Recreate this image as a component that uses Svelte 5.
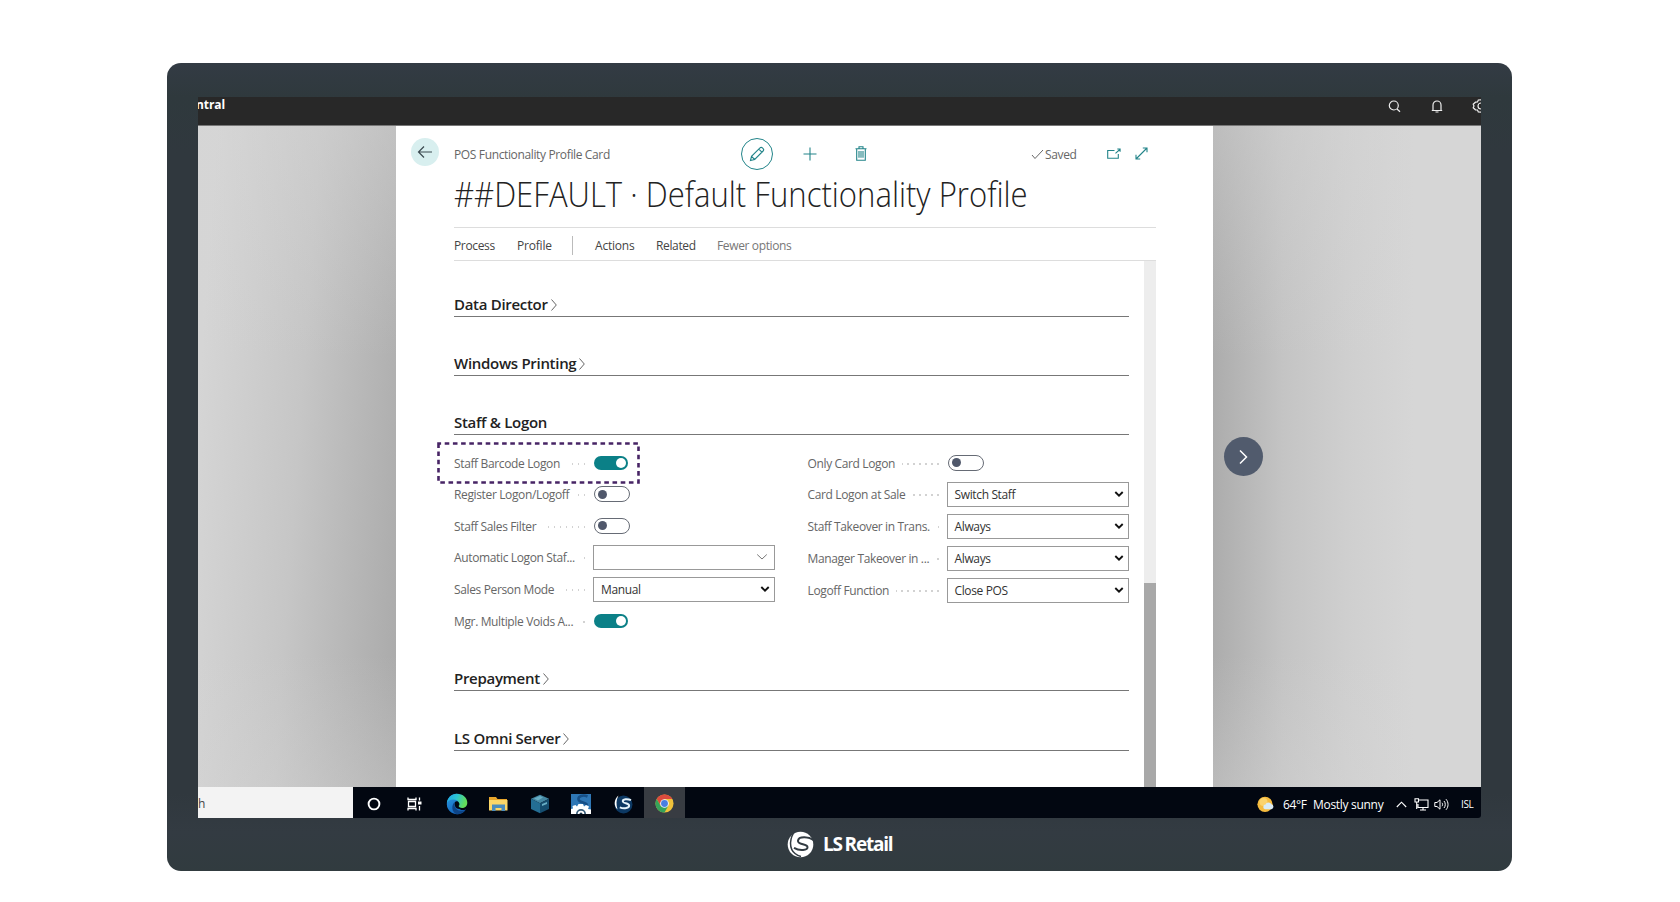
<script>
  const left = [
    { label: 'Staff Barcode Logon', type: 'toggle', on: true, mark: true, h: 31 },
    { label: 'Register Logon/Logoff', type: 'toggle', on: false, h: 32 },
    { label: 'Staff Sales Filter', type: 'toggle', on: false, h: 31 },
    { label: 'Automatic Logon Staf...', type: 'lookup', value: '', h: 32 },
    { label: 'Sales Person Mode', type: 'select', value: 'Manual', h: 32 },
    { label: 'Mgr. Multiple Voids A...', type: 'toggle', on: true, h: 31 }
  ];
  const right = [
    { label: 'Only Card Logon', type: 'toggle', on: false, h: 31 },
    { label: 'Card Logon at Sale', type: 'select', value: 'Switch Staff', h: 32 },
    { label: 'Staff Takeover in Trans.', type: 'select', value: 'Always', h: 32 },
    { label: 'Manager Takeover in ...', type: 'select', value: 'Always', h: 32 },
    { label: 'Logoff Function', type: 'select', value: 'Close POS', h: 32 }
  ];
</script>

{#snippet field(f)}
  <div class="field" style="height:{f.h}px">
    <div class="label"><span>{f.label}</span><i></i></div>
    {#if f.type === 'toggle'}
      <div class="toggle" class:on={f.on}><b></b></div>
    {:else}
      <div class="box">
        <span>{f.value}</span>
        {#if f.type === 'select'}
          <svg width="10" height="8" viewBox="0 0 10 8"><path d="M1.3 2l3.7 3.6L8.7 2" fill="none" stroke="#111" stroke-width="1.9" /></svg>
        {:else}
          <svg class="thin" width="12" height="8" viewBox="0 0 12 8"><path d="M1.2 1.5L6 6l4.8-4.5" fill="none" stroke="#777" stroke-width="1" /></svg>
        {/if}
      </div>
    {/if}
    {#if f.mark}
      <svg class="mark" width="203" height="42" viewBox="0 0 203 42"><rect x="1.5" y="1.5" width="200" height="39" fill="none" stroke="#472465" stroke-width="2.6" stroke-dasharray="4.6 3.6" stroke-dashoffset="2" /></svg>
    {/if}
  </div>
{/snippet}

{#snippet heading(text, arrow)}
  <h2>
    <span>{text}</span>
    {#if arrow}
      <svg width="8" height="14" viewBox="0 0 8 14"><path d="M1.5 1.5L6.3 7l-4.8 5.5" fill="none" stroke="#666" stroke-width="1" /></svg>
    {/if}
  </h2>
{/snippet}

<main>
  <div class="monitor">
    <div class="screen">
      <header>
        <strong>ntral</strong>
        <svg class="search" width="13" height="13" viewBox="0 0 13 13"><circle cx="5.8" cy="5.5" r="4.5" /><path d="M9 9l3 2.8" /></svg>
        <svg class="bell" width="12" height="13" viewBox="0 0 12 13"><path d="M2 10.5V5a4 4 0 0 1 8 0v5.5M.8 10.500h10.400M4.500 12h3" /></svg>
        <svg class="gear" width="9" height="14" viewBox="0 0 9 14"><path d="M9 .8L6.300 1 5.500 3 3.500 3.200 1.200 5.200 2 7 1.200 8.800l2.300 2L5.500 11l.8 2 2.700.2M9 4a3 3 0 0 0 0 6" /></svg>
      </header>

      <div class="desk">
        <div class="gutter west"></div>
        <section class="panel">
          <div class="tools">
            <div class="back"><svg width="16" height="14" viewBox="0 0 16 14"><path d="M15 7H1.500M7 1.500L1.500 7 7 12.500" /></svg></div>
            <span class="crumb">POS Functionality Profile Card</span>
            <div class="edit"><svg width="16" height="16" viewBox="0 0 16 16"><path d="M1.500 14.500l1-4.200L11 1.900c.7-.7 1.700-.7 2.400 0l.7.700c.7.700.7 1.700 0 2.400L5.700 13.500zM2.500 10.300l3.200 3.200M9.800 3.100l3.100 3.100" /></svg></div>
            <svg class="plus" width="14" height="14" viewBox="0 0 14 14"><path d="M7 .5v13M.5 7h13" /></svg>
            <svg class="bin" width="12" height="15" viewBox="0 0 12 15"><path d="M.5 2.700h11M4 2.700V.8h4v1.900M1.700 2.700v11.500h8.600V2.700M4 5v6.800M6 5v6.800M8 5v6.800" /></svg>
            <span class="saved"><svg width="13" height="11" viewBox="0 0 13 11"><path d="M1 6l3 3.500L12 1" /></svg>Saved</span>
            <svg class="pop" width="14" height="11" viewBox="0 0 14 11"><path d="M7.500 2.500H.7v7.700h10.600V6M8.500 5.300l4.300-3.800M10.300 1h2.800v2.800" /></svg>
            <svg class="grow" width="13" height="13" viewBox="0 0 13 13"><path d="M1 12L12 1M7.800 1H12v4.200M1 7.800V12h4.200" /></svg>
          </div>
          <h1>##DEFAULT · Default Functionality Profile</h1>
          <nav>
            <span class="process">Process</span><span class="profile">Profile</span><em></em><span class="actions">Actions</span><span class="related">Related</span><span class="fewer">Fewer options</span>
          </nav>
          <div class="body">
            <div class="form">
              {@render heading('Data Director', true)}
              {@render heading('Windows Printing', true)}
              {@render heading('Staff & Logon', false)}
              <div class="cols">
                <div class="col">{#each left as f}{@render field(f)}{/each}</div>
                <div class="col">{#each right as f}{@render field(f)}{/each}</div>
              </div>
              {@render heading('Prepayment', true)}
              {@render heading('LS Omni Server', true)}
            </div>
            <div class="scroll"><div class="thumb"></div></div>
          </div>
        </section>
        <div class="gutter east">
          <div class="next"><svg width="11" height="16" viewBox="0 0 11 16"><path d="M2 1.500L8.500 8 2 14.500" fill="none" stroke="#fff" stroke-width="1.500" /></svg></div>
        </div>
      </div>

      <footer>
        <div class="find">h</div>
        <div class="apps">
          <div class="app"><svg width="14" height="14" viewBox="0 0 14 14"><circle cx="7" cy="7" r="5.400" fill="none" stroke="#fff" stroke-width="1.900" /></svg></div>
          <div class="app"><svg class="views" width="15" height="14" viewBox="0 0 15 14"><path d="M1 .5v2h8v-2M1 13.500v-2h8v2M1.500 4.500h7v5h-7zM12.500.5v3M12.500 9v4.500" fill="none" stroke="#fff" stroke-width="1.300" /><path d="M11 4.500h3.500v3H11z" fill="#fff" /></svg></div>
          <div class="app"><svg width="22" height="22" viewBox="0 0 22 22">
            <defs>
              <linearGradient id="ea" x1="0" y1="0" x2="1" y2="0.300"><stop offset="0" stop-color="#1fa5e8" /><stop offset=".5" stop-color="#2bc4d3" /><stop offset="1" stop-color="#63de58" /></linearGradient>
              <linearGradient id="eb" x1="0" y1="0" x2="0.600" y2="1"><stop offset="0" stop-color="#2a9be6" /><stop offset="1" stop-color="#1262b8" /></linearGradient>
            </defs>
            <path d="M11 .7A10.300 10.300 0 1 0 19.800 16.500c-3 1.300-7 .6-7.300-2.500L13 6z" fill="url(#eb)" />
            <path d="M.8 10C1.500 4.500 5.800.7 11 .7c6 0 10.300 4.300 10.300 9 0 3.400-2.500 5.300-5.300 5.300-2.600 0-3.800-1-3.300-1.800.6-.9.900-1.700.6-2.700C12.700 8 10 6.300 7 6.500 4 6.700 1.700 8 .8 10z" fill="url(#ea)" />
            <path d="M8.800 9c-1.500 4.500 1.400 8.500 5.700 8.800 2 .1 4-.2 5.300-1.300-2 3-5 4.700-8.800 4.800C5.500 19.500 5 12 8.800 9z" fill="#0d4487" />
            <path d="M9 9c1.500-1.300 3.500-.6 4 1 .3 1.200-.2 2.300-.4 3.200.3 1.200 2 1.900 4 1.700-1.800 1-3.500 1.300-5.600.6C9 14.500 8 11.500 9 9z" fill="#020711" />
          </svg></div>
          <div class="app"><svg width="19" height="16" viewBox="0 0 19 16"><path d="M0 1h7l1.500 2H18v11H0z" fill="#e9a62c" /><path d="M0 4h18.500v10.500H0z" fill="#fbd768" /><path d="M3 8.500h13V15h-3.500v-3h-6v3H3z" fill="#4b8dbd" /></svg></div>
          <div class="app"><svg width="20" height="20" viewBox="0 0 20 20"><path d="M10 .8l9 4-9 4.500-9-4.500z" fill="#4487a3" /><path d="M1 4.800l9 4.500v10L1 15z" fill="#246e94" /><path d="M19 4.800l-9 4.500v10l9-4.300z" fill="#154d6f" /><path d="M4 4.500l6-2.500 3 1.500-5 3zM12 10l5-2v2l-5 2z" fill="#68aec5" /></svg></div>
          <div class="app"><svg width="20" height="20" viewBox="0 0 20 20"><path d="M0 0h20v20H0z" fill="#2f77b5" /><path d="M16.500 2.500C12 .5 7 2 7.500 5.500s8 2.500 8.500 5.500" fill="none" stroke="#174f86" stroke-width="2.500" /><path d="M0 20v-5l2-.5-.5-2.500 3-1 1.500 1.500 1.500-2.500h4.500l1 2.500 2-1.500 3 1.500-1 2.500 3 .5v4.500z" fill="#fff" /><path d="M5 20a5 5 0 0 1 10 0h-1.700a3.300 3.300 0 0 0-6.600 0z" fill="#375b78" /><path d="M8.500 20a1.500 1.500 0 0 1 3 0z" fill="#17344d" /></svg></div>
          <div class="app"><svg width="20" height="20" viewBox="0 0 20 20"><circle cx="10.500" cy="10.500" r="9" fill="#0c3863" /><path d="M5.500 1.500C.8 5.500.5 11.500 4.500 15.500 3 10.500 3 6 5.500 1.500z" fill="#fff" /><path d="M18 6.200C14.500 4.500 9.500 4.800 9.800 7.500c.3 2.300 6 1.300 6.300 4 .2 2.500-4.800 3.800-9.300 1.800" fill="none" stroke="#e4f2fa" stroke-width="2" /></svg></div>
          <div class="app current"><svg width="19" height="19" viewBox="0 0 20 20"><circle cx="10" cy="10" r="9.500" fill="#f0c13b" /><path d="M1.770 5.250A9.500 9.500 0 0 1 18.230 5.250H10L6 12.300z" fill="#dc4b3d" /><path d="M1.770 5.250A9.500 9.500 0 0 0 10 19.500l4-7.100-7.800.4z" fill="#35a35a" /><circle cx="10" cy="10" r="4.600" fill="#f4f6f4" /><circle cx="10" cy="10" r="3.600" fill="#4a7ee0" /></svg></div>
        </div>
        <div class="tray">
          <svg class="sun" width="17" height="17" viewBox="0 0 17 17"><circle cx="8" cy="8.300" r="7.600" fill="#f5bb3e" /><circle cx="6.500" cy="6" r="4" fill="#fbd36d" /><path d="M8 13.200a2.400 2.400 0 0 1 .5-4.700 3.200 3.200 0 0 1 5.900-.2 2.500 2.500 0 0 1 .1 4.900z" fill="#d9ebf5" /></svg>
          <span class="temp">64°F</span><span class="sky">Mostly sunny</span>
          <svg class="up" width="11" height="7" viewBox="0 0 11 7"><path d="M.8 6L5.500 1.200 10.200 6" fill="none" stroke="#fff" stroke-width="1.100" /></svg>
          <svg class="net" width="15" height="13" viewBox="0 0 15 13"><path d="M5 2h9v7.500H4V6M9 9.500V12M6 12h6M1 .8h3.500V4H1zM2.700 4v7" fill="none" stroke="#fff" stroke-width="1.100" /></svg>
          <svg class="vol" width="15" height="13" viewBox="0 0 15 13"><path d="M.8 4.500v4h2.200l3 2.700V1.800L3 4.500zM8 4.800c.8 1 .8 2.400 0 3.400M10 3c1.700 2 1.700 5 0 7M12 1.200c2.700 3 2.700 7.600 0 10.600" fill="none" stroke="#fff" stroke-width="1" /></svg>
          <span class="lang">ISL</span>
        </div>
      </footer>
    </div>
    <div class="brand">
      <svg width="27" height="27" viewBox="0 0 27 27">
        <circle cx="13.500" cy="13.500" r="12.800" fill="#fff" />
        <path d="M8.500-.5C2.500 6.500 1.500 17 8 22.500c2 1.700 4 2.600 6 3" fill="none" stroke="#323b42" stroke-width="1.500" />
        <path d="M27 9.500C22 5.500 11.500 5 11 9.700c-.4 4.300 9.300 2.600 9.500 6.300.2 3.200-7.500 4.400-13.500.8" fill="none" stroke="#323b42" stroke-width="2" />
      </svg>
      <span>LS Retail</span>
    </div>
  </div>
</main>

<style>
  :global(body) { margin: 0; background: #fff; }
  main { width: 1680px; height: 902px; padding: 63px 0 0 167px; box-sizing: border-box; overflow: hidden; font-family: "Open Sans", "Noto Sans", sans-serif; font-size: 12px; letter-spacing: -.36px; color: #444; white-space: nowrap; }
  .monitor { width: 1345px; height: 808px; border-radius: 14px; box-sizing: border-box; padding: 34px 0 0 31px; background: linear-gradient(180deg, #333b44 0, #2f393d 34px, #30383e 90px, #30383e 730px, #333b42 770px, #313b3f 100%); }
  .screen { width: 1283px; height: 721px; display: flex; flex-direction: column; overflow: hidden; border-radius: 0 0 3px 0; }
  header { height: 28px; flex: none; background: #282828; border-bottom: 1px solid #777; display: flex; align-items: flex-start; overflow: hidden; box-sizing: content-box; }
  header svg { fill: none; stroke: #eee; stroke-width: 1.2; flex: none; }
  header strong { font-size: 12px; line-height: 16px; color: #fff; text-indent: -2px; width: 1190px; letter-spacing: -.1px; }
  .search { margin-top: 3px; }
  .bell { margin: 3px 0 0 30px; }
  .gear { margin: 2px 0 0 29px; }

  .desk { flex: 1; display: flex; min-height: 0; background: #fff; }
  .gutter.west { width: 198px; background: linear-gradient(180deg, #d6d6d666 0, #d6d6d600 35%, #d6d6d600 80%, #d6d6d655 100%), linear-gradient(94deg, #d5d5d5 8%, #c6c6c6 50%, #a9a9a9 100%); }
  .gutter.east { flex: 1; background: linear-gradient(180deg, #d6d6d666 0, #d6d6d600 35%, #d6d6d600 80%, #d6d6d655 100%), linear-gradient(90deg, #acacac 0, #c4c4c4 26%, #cfcfcf 50%, #d6d6d6 75%, #d6d6d6 100%); }
  .next { width: 39px; height: 39px; border-radius: 50%; background: #515b6d; margin: 311px 0 0 11px; display: flex; align-items: center; justify-content: center; }

  .panel { width: 817px; background: #fff; display: flex; flex-direction: column; padding-left: 58px; box-sizing: border-box; }
  .tools { height: 54px; padding-top: 1px; box-sizing: border-box; display: flex; align-items: center; margin-left: -43px; flex: none; }
  .tools svg { fill: none; stroke: #228489; stroke-width: 1.1; flex: none; }
  .tools .back svg { stroke: #3b4a50; stroke-width: 1.2; }
  .back { width: 28px; height: 28px; border-radius: 50%; background: #d8efef; display: flex; align-items: center; justify-content: center; margin-right: 15px; margin-top: -3px; }
  .crumb { width: 287px; color: #666; padding-top: 1px; }
  .edit { width: 30px; height: 30px; border: 1px solid #228489; border-radius: 50%; display: flex; align-items: center; justify-content: center; }
  .plus { margin-left: 30px; }
  .bin { margin-left: 38px; }
  .saved { margin-left: 164px; display: flex; align-items: center; gap: 1px; color: #666; width: 76px; padding-top: 1px; }
  .tools .saved svg { stroke: #666; stroke-width: 1; }
  .grow { margin-left: 14px; }
  h1 { margin: 0; height: 47px; line-height: 28px; font-size: 35px; font-weight: 300; color: #222; flex: none; letter-spacing: 0; transform: scaleX(.888); transform-origin: 0 0; }
  nav { height: 32px; padding-top: 2px; box-sizing: border-box; height: 34px; width: 702px; border-top: 1px solid #ddd; border-bottom: 1px solid #ddd; display: flex; align-items: center; flex: none; color: #444; }
  nav .process { width: 63px; }
  nav .profile { width: 55px; letter-spacing: -.2px; }
  nav em { width: 1px; height: 19px; background: #bbb; margin-right: 22px; }
  nav .actions { width: 61px; letter-spacing: -.2px; }
  nav .related { width: 61px; }
  nav .fewer { color: #777; }

  .body { flex: 1; display: flex; min-height: 0; }
  .form { width: 675px; margin-right: 15px; }
  h2 { margin: 0; height: 59px; box-sizing: border-box; border-bottom: 1px solid #777; display: flex; align-items: flex-end; gap: 2px; font-size: 15px; line-height: 20px; font-weight: 600; letter-spacing: -.3px; color: #222; padding-bottom: 2px; }
  .form h2:first-child { height: 56px; }
  .form h2:last-child { height: 60px; }
  h2 svg { margin-bottom: 2px; }
  .cols { display: flex; gap: 33px; height: 197px; padding-top: 12px; box-sizing: border-box; }
  .col { width: 320.5px; }
  .col + .col { width: 321.5px; }
  .field { display: flex; align-items: center; position: relative; }
  .label { width: 131px; margin-right: 8px; padding-top: 1px; display: flex; align-items: center; color: #666; gap: 7px; flex: none; }
  .label i { flex: 1; height: 2px; margin-top: 1px; background: repeating-linear-gradient(270deg, #d2d2d2 0 1.5px, transparent 1.5px 6px); }
  .toggle { width: 36px; height: 16px; box-sizing: border-box; border: 1px solid #666b75; border-radius: 8px; padding: 2.5px 3px; margin-left: 1px; }
  .toggle b { display: block; width: 9px; height: 9px; border-radius: 50%; background: #50586b; }
  .toggle.on { background: #0b8087; border: 0; width: 34px; height: 14px; padding: 2px; display: flex; justify-content: flex-end; }
  .toggle.on b { background: #fff; width: 10px; height: 10px; }
  .box { flex: 1; height: 25px; box-sizing: border-box; border: 1px solid #999; display: flex; align-items: center; justify-content: space-between; padding: 0 4px 0 7px; color: #333; }
  .box .thin { margin-right: 2px; }
  .mark { position: absolute; left: -17px; top: -5px; }
  .scroll { width: 12px; background: #ededed; display: flex; }
  .thumb { flex: 1; margin-top: 322px; background: #a8a8a8; }

  footer { height: 31px; flex: none; background: #020711; display: flex; color: #fff; }
  .find { width: 155px; background: #f3f3f3; color: #444; line-height: 34px; }
  .apps { display: flex; }
  .app { width: 41.5px; display: flex; align-items: center; justify-content: center; padding-top: 2px; box-sizing: border-box; }
  .views { margin-right: 2px; }
  .current { background: #383c42; }
  .tray { margin-left: auto; display: flex; align-items: center; padding-top: 3px; }
  .temp { margin-left: 9px; width: 30px; }
  .sky { width: 83px; letter-spacing: -.3px; }
  .net { margin-left: 7px; }
  .vol { margin-left: 5px; }
  .lang { font-size: 10px; width: 20px; margin-left: 12px; }

  .brand { display: flex; align-items: center; gap: 9px; margin: 13px 0 0 589px; height: 27px; color: #fff; font-weight: 700; font-size: 19px; letter-spacing: -1.2px; word-spacing: -1px; }
  .brand span { margin-top: -2px; }
</style>
